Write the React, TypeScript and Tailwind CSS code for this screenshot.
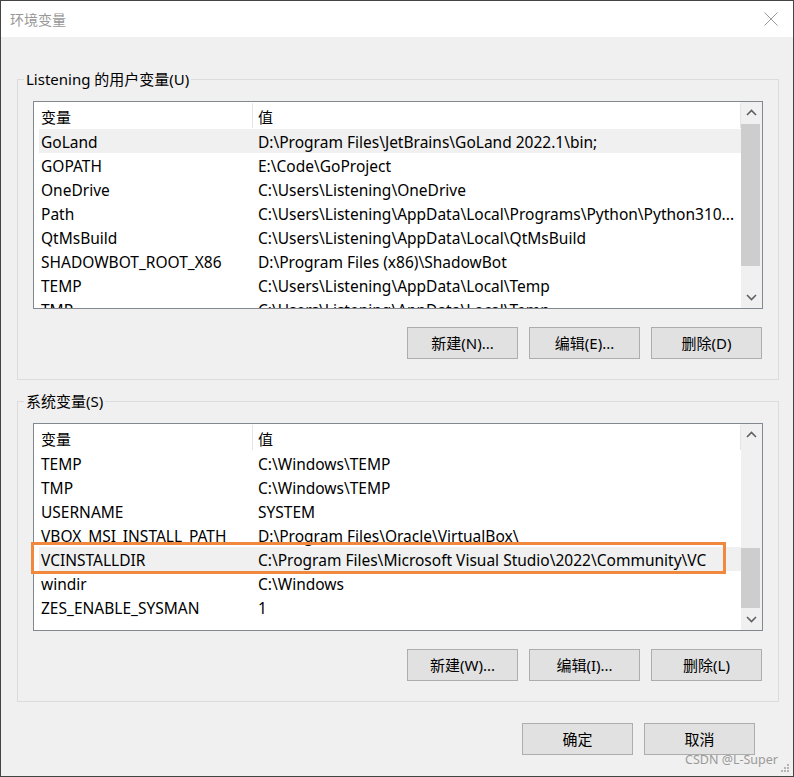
import React from "react";

const FONT = { fontFamily: '"Noto Sans", "Noto Sans CJK SC", sans-serif' };

type Row = [string, string];

const userRows: Row[] = [
  ["GoLand", "D:\\Program Files\\JetBrains\\GoLand 2022.1\\bin;"],
  ["GOPATH", "E:\\Code\\GoProject"],
  ["OneDrive", "C:\\Users\\Listening\\OneDrive"],
  ["Path", "C:\\Users\\Listening\\AppData\\Local\\Programs\\Python\\Python310..."],
  ["QtMsBuild", "C:\\Users\\Listening\\AppData\\Local\\QtMsBuild"],
  ["SHADOWBOT_ROOT_X86", "D:\\Program Files (x86)\\ShadowBot"],
  ["TEMP", "C:\\Users\\Listening\\AppData\\Local\\Temp"],
  ["TMP", "C:\\Users\\Listening\\AppData\\Local\\Temp"],
];

const sysRows: Row[] = [
  ["TEMP", "C:\\Windows\\TEMP"],
  ["TMP", "C:\\Windows\\TEMP"],
  ["USERNAME", "SYSTEM"],
  ["VBOX_MSI_INSTALL_PATH", "D:\\Program Files\\Oracle\\VirtualBox\\"],
  ["VCINSTALLDIR", "C:\\Program Files\\Microsoft Visual Studio\\2022\\Community\\VC"],
  ["windir", "C:\\Windows"],
  ["ZES_ENABLE_SYSMAN", "1"],
];

function Chevron({ up }: { up: boolean }) {
  return (
    <svg width="11" height="7" viewBox="0 0 11 7">
      {up ? (
        <polyline points="1,6 5.5,1.5 10,6" fill="none" stroke="#606060" strokeWidth="1.6" />
      ) : (
        <polyline points="1,1 5.5,5.5 10,1" fill="none" stroke="#606060" strokeWidth="1.6" />
      )}
    </svg>
  );
}

function Scrollbar({ top, height }: { top: number; height: number }) {
  return (
    <div className="w-[21px] bg-[#f0f0f0] flex flex-col shrink-0">
      <div className="h-[21px] flex items-center justify-center">
        <Chevron up />
      </div>
      <div className="flex-1">
        <div className="bg-[#cdcdcd] w-[19px]" style={{ marginTop: top, height }} />
      </div>
      <div className="h-[21px] flex items-center justify-center">
        <Chevron up={false} />
      </div>
    </div>
  );
}

function ListView({
  rows,
  selected,
  thumbTop,
  thumbHeight,
}: {
  rows: Row[];
  selected: number;
  thumbTop: number;
  thumbHeight: number;
}) {
  return (
    <div className="h-[208px] border border-[#828790] bg-white flex overflow-hidden">
      <div className="flex-1 min-w-0 pl-[5px] overflow-hidden">
        <div className="flex h-[27px] items-center">
          <div className="w-[213px] pl-[2px] pt-[2px] text-[15px] leading-[20px] text-black">变量</div>
          <div className="w-px h-[25px] bg-[#e5e5e5]" />
          <div className="flex-1 pl-[5px] pt-[2px] text-[15px] leading-[20px] text-black">值</div>
          <div className="w-px h-[25px] bg-[#e5e5e5]" />
        </div>
        {rows.map(([n, v], i) => (
          <div
            key={i}
            className={
              "flex h-[24px] items-center pt-[2px] whitespace-nowrap text-[15.5px] leading-[20px] text-black " +
              (i === selected ? "bg-[#f0f0f0]" : "")
            }
          >
            <div className="w-[214px] pl-[2px] overflow-hidden">{n}</div>
            <div className="flex-1 pl-[5px] overflow-hidden">{v}</div>
          </div>
        ))}
      </div>
      <Scrollbar top={thumbTop} height={thumbHeight} />
    </div>
  );
}

function Btn({ label }: { label: string }) {
  return (
    <div className="w-[111px] h-[32px] bg-[#e1e1e1] border border-[#adadad] flex items-center justify-center text-[15px] text-black">
      {label}
    </div>
  );
}

function Group({
  title,
  rows,
  selected,
  thumbTop,
  thumbHeight,
  buttons,
}: {
  title: string;
  rows: Row[];
  selected: number;
  thumbTop: number;
  thumbHeight: number;
  buttons: string[];
}) {
  return (
    <fieldset className="border border-[#dcdcdc] px-[6px] pb-[20px]">
      <legend className="px-[2px] text-[15px] leading-[20px] text-black">{title}</legend>
      <div className="px-[9px] pt-[12px]">
        <ListView rows={rows} selected={selected} thumbTop={thumbTop} thumbHeight={thumbHeight} />
        <div className="flex justify-end gap-[11px] mt-[18px] pr-[1px]">
          {buttons.map((b) => (
            <Btn key={b} label={b} />
          ))}
        </div>
      </div>
    </fieldset>
  );
}

export default function App() {
  return (
    <div
      className="relative w-[794px] h-[777px] border border-[#444] bg-[#f0f0f0] overflow-hidden flex flex-col"
      style={FONT}
    >
      <div className="h-[36px] bg-white flex items-center justify-between pl-[9px] pr-[15px] shrink-0">
        <span className="text-[14px] text-[#999]">环境变量</span>
        <svg width="14" height="14" viewBox="0 0 14 14">
          <line x1="0.5" y1="0.5" x2="13.5" y2="13.5" stroke="#999" strokeWidth="1" />
          <line x1="13.5" y1="0.5" x2="0.5" y2="13.5" stroke="#999" strokeWidth="1" />
        </svg>
      </div>
      <div className="flex-1 pl-[16px] pr-[14px] pt-[32px] flex flex-col">
        <Group
          title="Listening 的用户变量(U)"
          rows={userRows}
          selected={0}
          thumbTop={1}
          thumbHeight={142}
          buttons={["新建(N)...", "编辑(E)...", "删除(D)"]}
        />
        <div className="h-[11px]" />
        <Group
          title="系统变量(S)"
          rows={sysRows}
          selected={4}
          thumbTop={103}
          thumbHeight={60}
          buttons={["新建(W)...", "编辑(I)...", "删除(L)"]}
        />
        <div className="flex justify-end gap-[11px] mt-[21px] pr-[24px]">
          <Btn label="确定" />
          <Btn label="取消" />
        </div>
      </div>

      {/* orange annotation box */}
      <div className="absolute left-[30px] top-[541px] w-[695px] h-[32px] border-[3px] border-[#f0883e]" />

      {/* watermark */}
      <div className="absolute right-[15px] bottom-[8px] text-[12.5px] text-[#9a9a9a] leading-[16px]">
        CSDN @L-Super
      </div>

      {/* resize grip */}
      <svg className="absolute right-[3px] bottom-[3px]" width="10" height="10" viewBox="0 0 10 10">
        <rect x="7" y="1" width="2" height="2" fill="#b5b5b5" />
        <rect x="4" y="4" width="2" height="2" fill="#b5b5b5" />
        <rect x="7" y="4" width="2" height="2" fill="#b5b5b5" />
        <rect x="1" y="7" width="2" height="2" fill="#b5b5b5" />
        <rect x="4" y="7" width="2" height="2" fill="#b5b5b5" />
        <rect x="7" y="7" width="2" height="2" fill="#b5b5b5" />
      </svg>
    </div>
  );
}
